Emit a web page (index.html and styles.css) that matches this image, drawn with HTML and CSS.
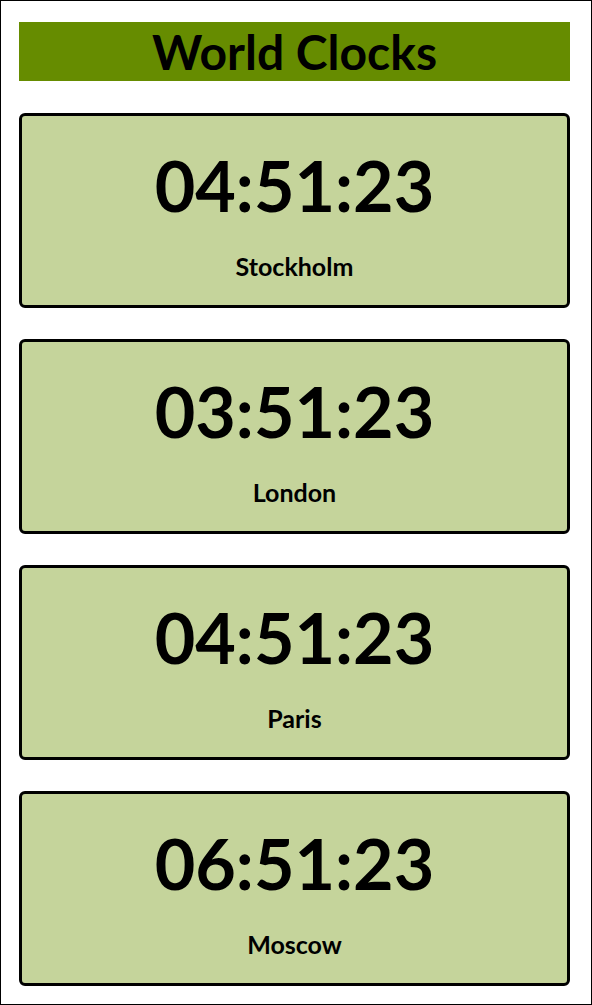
FILE: index.html
```html
<!DOCTYPE html>
<html lang="en">
<head>
<meta charset="utf-8">
<title>World Clocks</title>
<link rel="stylesheet" href="styles.css">
</head>
<body>
<div class="frame">
  <h1 class="title">World Clocks</h1>
  <div class="clocks">
    <div class="clock"><div class="time">04:51:23</div><div class="city">Stockholm</div></div>
    <div class="clock"><div class="time">03:51:23</div><div class="city">London</div></div>
    <div class="clock"><div class="time">04:51:23</div><div class="city">Paris</div></div>
    <div class="clock"><div class="time">06:51:23</div><div class="city">Moscow</div></div>
  </div>
</div>
</body>
</html>
```

FILE: styles.css
```css
html, body {
  margin: 0;
  padding: 0;
  background: #ffffff;
}
body {
  font-family: "Lato", "Noto Sans", sans-serif;
  color: #000;
}
.frame {
  box-sizing: border-box;
  width: 592px;
  height: 1005px;
  border: 1px solid #000;
  padding: 21px 21px 0 18px;
  overflow: hidden;
}
.title {
  margin: 0;
  height: 59px;
  line-height: 59px;
  background: #668c00;
  text-align: center;
  font-size: 48px;
  font-weight: 700;
}
.clocks {
  display: flex;
  flex-direction: column;
  gap: 31px;
  margin-top: 32px;
}
.clock {
  box-sizing: border-box;
  height: 195px;
  border: 3px solid #000;
  border-radius: 6px;
  background: #c5d49b;
  display: flex;
  flex-direction: column;
  align-items: center;
  padding-top: 27px;
}
.time {
  font-size: 70px;
  font-weight: 700;
  line-height: 84px;
}
.city {
  margin-top: 24px;
  font-size: 25px;
  font-weight: 700;
  line-height: 30px;
}
```
